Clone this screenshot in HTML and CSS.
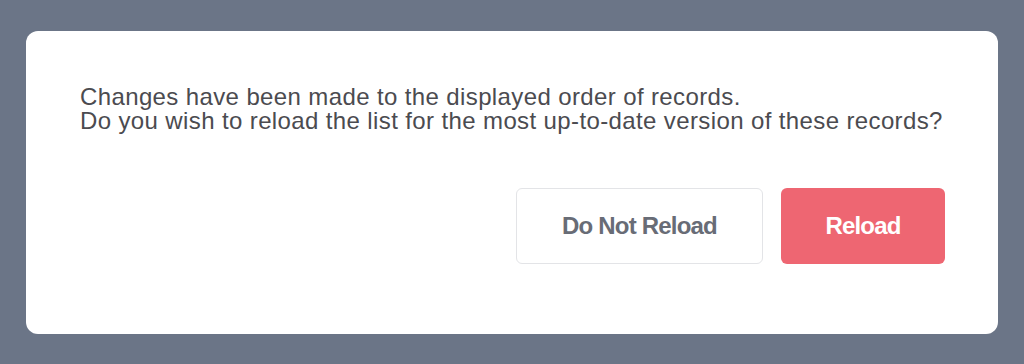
FILE: index.html
```html
<!DOCTYPE html>
<html>
<head>
<meta charset="utf-8">
<link rel="stylesheet" href="styles.css">
</head>
<body>
<div class="dialog">
  <p class="msg">Changes have been made to the displayed order of records.<br>Do you wish to reload the list for the most up-to-date version of these records?</p>
  <div class="actions">
    <button class="btn btn-secondary">Do Not Reload</button>
    <button class="btn btn-primary">Reload</button>
  </div>
</div>
</body>
</html>
```
FILE: styles.css
```css
html, body {
  margin: 0;
  padding: 0;
  height: 100%;
}
body {
  background: #6b7587;
  padding: 31px 26px 30px;
  box-sizing: border-box;
}
.dialog {
  background: #ffffff;
  border-radius: 12px;
  height: 303px;
  box-sizing: border-box;
  padding: 54px 53px 70px 54px;
  display: flex;
  flex-direction: column;
}
.msg {
  margin: 0;
  font-family: "Liberation Sans", Arial, sans-serif;
  font-size: 24px;
  line-height: 24px;
  letter-spacing: 0.38px;
  color: #4b4b50;
}
.actions {
  margin-top: auto;
  display: flex;
  justify-content: flex-end;
  gap: 18px;
}
.btn {
  font-family: "Liberation Sans", Arial, sans-serif;
  font-weight: 700;
  font-size: 24px;
  letter-spacing: -0.8px;
  height: 76px;
  border-radius: 6px;
  cursor: pointer;
  padding: 0;
}
.btn-secondary {
  width: 247px;
  background: #ffffff;
  border: 1px solid #e3e4e7;
  color: #686c76;
}
.btn-primary {
  width: 164px;
  background: #ee6672;
  border: none;
  color: #ffffff;
}
```
